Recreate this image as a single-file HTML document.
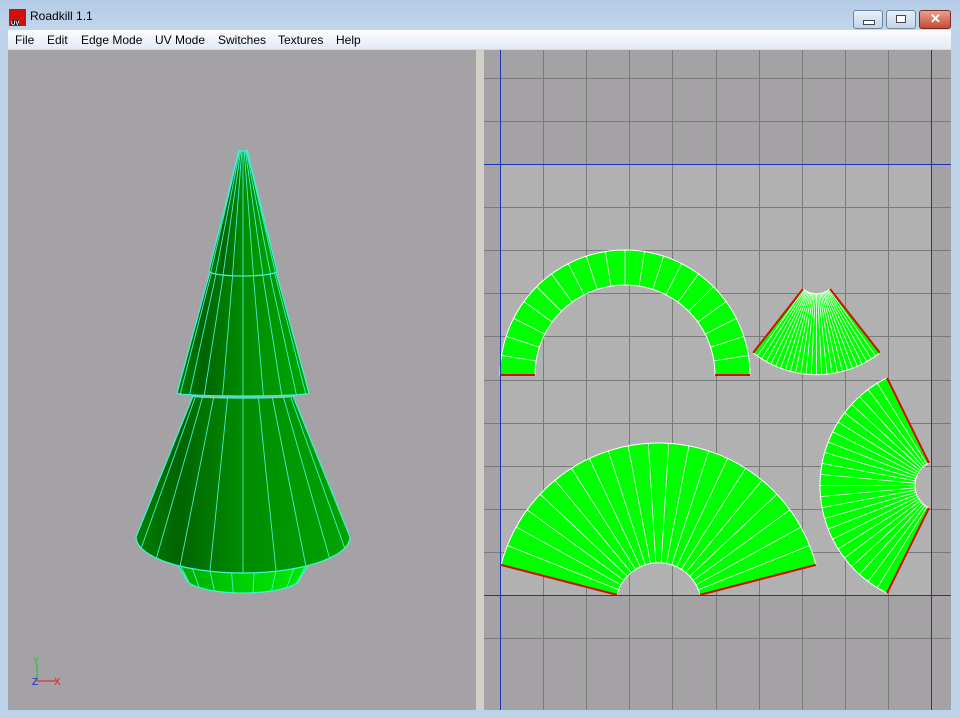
<!DOCTYPE html>
<html><head><meta charset="utf-8"><style>
*{margin:0;padding:0}
body{width:960px;height:718px;overflow:hidden;background:#bcd3ea;font-family:"Liberation Sans",sans-serif;position:relative}
#title{position:absolute;left:0;top:0;width:960px;height:30px;background:linear-gradient(#b3cbe6,#c2d6ec)}
#title span{position:absolute;left:30px;top:9px;font-size:12px;color:#000}
#menu{position:absolute;left:8px;top:30px;width:943px;height:19px;background:linear-gradient(#fbfcfe,#e4ebf5);border-bottom:1px solid #cfd9e6}
#menu span{position:absolute;top:3px;font-size:12px;color:#000}
.btn{position:absolute;top:10px;height:17px;border:1px solid #6d84a3;border-radius:3px;background:linear-gradient(#e8f0f9,#c3d4e8)}
</style></head><body>
<div id="title">
<svg style="position:absolute;left:9px;top:9px" width="17" height="17"><rect width="17" height="17" fill="#d01010"/><rect x="2" y="11" width="8" height="5" fill="#200"/><text x="2" y="16" font-size="6" fill="#fff" font-family="Liberation Sans" font-weight="bold">UV</text></svg>
<span>Roadkill 1.1</span>
<div class="btn" style="left:853px;width:28px"><div style="position:absolute;left:9px;top:9px;width:10px;height:3px;background:#fff;border:1px solid #445"></div></div>
<div class="btn" style="left:886px;width:28px"><div style="position:absolute;left:9px;top:4px;width:8px;height:6px;border:1px solid #445;background:#fff"></div></div>
<div class="btn" style="left:919px;width:30px;border-color:#7a2a20;background:linear-gradient(#e8a090,#c84b32)"><span style="position:absolute;left:10px;top:0;color:#fff;font-weight:bold;font-size:13px">✕</span></div>
</div>
<div id="menu">
<span style="left:7px">File</span><span style="left:39px">Edit</span><span style="left:73px">Edge Mode</span><span style="left:147px">UV Mode</span><span style="left:210px">Switches</span><span style="left:270px">Textures</span><span style="left:328px">Help</span>
</div>
<svg id="main" style="position:absolute;left:0;top:0" width="960" height="718">
<defs>
<linearGradient id="g1" x1="0" x2="1"><stop offset="0" stop-color="#008000"/><stop offset="0.2" stop-color="#006400"/><stop offset="0.5" stop-color="#008c00"/><stop offset="1" stop-color="#00a400"/></linearGradient>
<linearGradient id="g2" x1="0" x2="1"><stop offset="0" stop-color="#00a800"/><stop offset="0.6" stop-color="#00d800"/><stop offset="1" stop-color="#00ea00"/></linearGradient>
</defs>
<rect x="8" y="50" width="468" height="660" fill="#a4a2a5"/>
<rect x="476" y="50" width="8" height="660" fill="#d4d0c8"/>
<rect x="484" y="50" width="467" height="660" fill="#a4a2a5"/>
<rect x="500" y="164" width="431" height="431" fill="#b1b1b1"/>
<g id="grid" stroke-width="1"></g>
<g id="uv"></g>
<g id="tree"></g>
<line x1="500.5" y1="50" x2="500.5" y2="710" stroke="#1c34b4"/>
<line x1="931.5" y1="50" x2="931.5" y2="710" stroke="#1c34b4"/>
<line x1="484" y1="164.5" x2="951" y2="164.5" stroke="#1c34b4"/>
<line x1="484" y1="595.5" x2="951" y2="595.5" stroke="#1c34b4"/>
<line x1="37" y1="681" x2="37" y2="664" stroke="#20c020"/>
<text x="33" y="664" font-size="9" fill="#20c020" font-family="Liberation Sans">Y</text>
<line x1="37" y1="681" x2="56" y2="681" stroke="#e02020"/>
<text x="54" y="685" font-size="10" fill="#e02020" font-family="Liberation Sans">X</text>
<text x="32" y="685" font-size="10" fill="#2020e0" font-family="Liberation Sans">Z</text>
</svg>
<script>
var NS="http://www.w3.org/2000/svg";
function el(p,t,a){var e=document.createElementNS(NS,t);for(var k in a)e.setAttribute(k,a[k]);p.appendChild(e);return e}
var g=document.getElementById('grid');
for(var i=0;i<=10;i++){var x=Math.round(500+i*43.1)+.5;if(i>0&&i<10)el(g,'line',{x1:x,y1:50,x2:x,y2:710,stroke:'#7a7a7a'});}
for(var j=-2;j<=11;j++){var y=Math.round(164+j*43.1)+.5;if(y>50&&y<710&&j!=0&&j!=10)el(g,'line',{x1:484,y1:y,x2:951,y2:y,stroke:'#7a7a7a'});}
var u=document.getElementById('uv');
function P(cx,cy,r,a){return [cx+r*Math.cos(a),cy+r*Math.sin(a)]}
function fan(cx,cy,R,r,a0,a1,n){
 var pts=[];
 for(var i=0;i<=n*3;i++){var a=a0+(a1-a0)*i/(n*3);pts.push(P(cx,cy,R,a));}
 for(var i=n*3;i>=0;i--){var a=a0+(a1-a0)*i/(n*3);pts.push(P(cx,cy,r,a));}
 el(u,'polygon',{points:pts.map(p=>p.join(',')).join(' '),fill:'#00ff00',stroke:'#fff','stroke-width':1});
 for(var i=1;i<n;i++){var a=a0+(a1-a0)*i/n;var p=P(cx,cy,R,a),q=P(cx,cy,r,a);el(u,'line',{x1:p[0],y1:p[1],x2:q[0],y2:q[1],stroke:'#fff','stroke-width':.8});}
 [a0,a1].forEach(function(a){var p=P(cx,cy,R,a),q=P(cx,cy,r,a);el(u,'line',{x1:p[0],y1:p[1],x2:q[0],y2:q[1],stroke:'#d01000','stroke-width':2});});
}
var D=Math.PI/180;
fan(625,375,125,90,-180*D,0,20);
fan(816.5,271.7,103,22,52*D,128*D,26);
fan(658.5,605.6,162.6,42.8,-165.5*D,-14.5*D,21);
fan(940,485.5,120,25,-116.2*D,-243.8*D,24);
var t=document.getElementById('tree');
function frust(cx,yt,wt,yb,wb,ebt,ebb,n,fill){
 var pts=[],m=30;
 pts.push([cx-wt,yt]);
 for(var i=0;i<=m;i++){var a=Math.PI*i/m;pts.push([cx-wb*Math.cos(a),yb+ebb*Math.sin(a)]);}
 pts.push([cx+wt,yt]);
 for(var i=m;i>=0;i--){var a=Math.PI*i/m;pts.push([cx-wt*Math.cos(a),yt+ebt*Math.sin(a)]);}
 el(t,'polygon',{points:pts.map(p=>p.join(',')).join(' '),fill:fill,stroke:'#40f0d0','stroke-width':1.3});
 for(var i=1;i<n;i++){var a=Math.PI*i/n;el(t,'line',{x1:cx-wt*Math.cos(a),y1:yt+ebt*Math.sin(a),x2:cx-wb*Math.cos(a),y2:yb+ebb*Math.sin(a),stroke:'#40f0d0','stroke-width':.9});}
}
frust(243,558,70,578,57,4,15,9,'url(#g2)');
frust(243,396,50,537,107,2,36,10,'url(#g1)');
frust(243,268,32,393,66,2,3,10,'url(#g1)');
frust(243,150,4,271,34,1,5,10,'url(#g1)');
</script>
</body></html>
